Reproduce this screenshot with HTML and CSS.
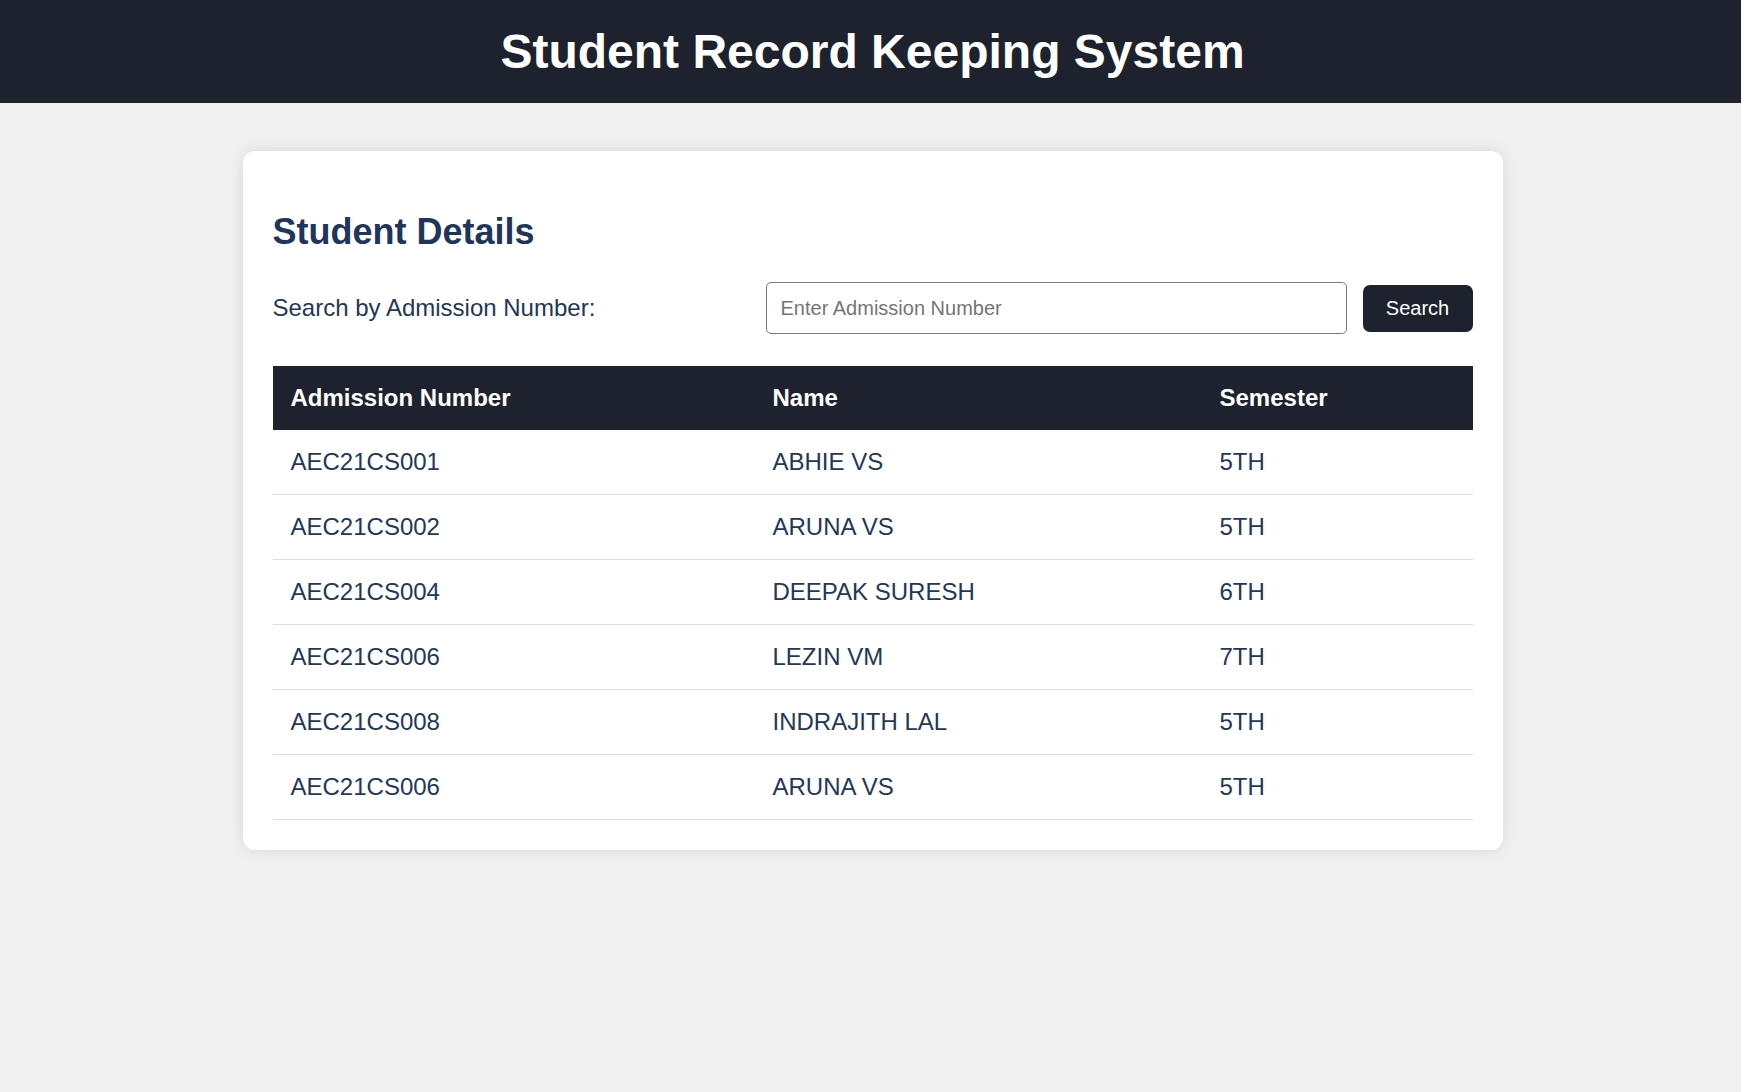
FILE: index.html
```html
<!DOCTYPE html>
<html lang="en">
<head>
<meta charset="utf-8">
<title>Student Record Keeping System</title>
<link rel="stylesheet" href="styles.css">
</head>
<body>
<header class="topbar">
  <h1 class="title">Student Record Keeping System</h1>
</header>
<div class="page">
<main class="card">
  <h2 class="card-title">Student Details</h2>
  <div class="search-row">
    <label class="search-label" for="adm">Search by Admission Number:</label>
    <input class="search-input" id="adm" type="text" placeholder="Enter Admission Number">
    <button class="search-btn" type="button">Search</button>
  </div>
  <table class="records">
    <thead>
      <tr>
        <th class="col-adm">Admission Number</th>
        <th class="col-name">Name</th>
        <th class="col-sem">Semester</th>
      </tr>
    </thead>
    <tbody>
      <tr><td>AEC21CS001</td><td>ABHIE VS</td><td>5TH</td></tr>
      <tr><td>AEC21CS002</td><td>ARUNA VS</td><td>5TH</td></tr>
      <tr><td>AEC21CS004</td><td>DEEPAK SURESH</td><td>6TH</td></tr>
      <tr><td>AEC21CS006</td><td>LEZIN VM</td><td>7TH</td></tr>
      <tr><td>AEC21CS008</td><td>INDRAJITH LAL</td><td>5TH</td></tr>
      <tr><td>AEC21CS006</td><td>ARUNA VS</td><td>5TH</td></tr>
    </tbody>
  </table>
</main>
</div>
</body>
</html>
```
FILE: styles.css
```css
* { box-sizing: border-box; }

html, body {
  margin: 0;
  padding: 0;
}

body {
  background: #f0f0f0;
  font-family: "Liberation Sans", Arial, sans-serif;
  font-size: 24px;
  color: #22375a;
  min-height: 1092px;
}

.topbar {
  background: #1d222e;
  height: 103px;
  display: flex;
  align-items: center;
  justify-content: center;
}

.title {
  margin: 0;
  color: #ffffff;
  font-size: 48px;
  font-weight: 700;
  line-height: 1;
  padding-left: 4px;
}

.page {
  padding-left: 4px;
}

.card {
  display: block;
  width: 1260px;
  margin: 48px auto 0;
  background: #ffffff;
  border-radius: 12px;
  box-shadow: 0 0 15px rgba(0, 0, 0, 0.1);
  padding: 30px 30px 30px;
}

.card-title {
  margin: 30px 0 30px;
  font-size: 36px;
  font-weight: 700;
  color: #1f355b;
  line-height: 41px;
}

.search-row {
  display: flex;
  align-items: center;
  gap: 16px;
}

.search-label {
  flex: 1;
  font-size: 24px;
  color: #22375a;
}

.search-input {
  width: 581px;
  height: 52px;
  border: 1px solid #7a7a7a;
  border-radius: 5px;
  padding: 0 14px;
  font-family: "Liberation Sans", Arial, sans-serif;
  font-size: 20px;
  color: #333;
  background: #fff;
}

.search-input::placeholder {
  color: #757575;
}

.search-btn {
  width: 110px;
  height: 47px;
  border: none;
  border-radius: 7px;
  background: #1d222e;
  color: #ffffff;
  font-family: "Liberation Sans", Arial, sans-serif;
  font-size: 20px;
  padding: 0;
}

.records {
  width: 100%;
  margin-top: 32px;
  border-collapse: collapse;
}

.records th {
  background: #1d222e;
  color: #ffffff;
  font-weight: 700;
  font-size: 24px;
  text-align: left;
  padding: 18px 18px 18px;
  line-height: 28px;
}

.col-adm { width: 482px; }
.col-name { width: 447px; }

.records td {
  padding: 18px 18px;
  line-height: 28px;
  font-size: 24px;
  color: #22375a;
  border-bottom: 1px solid #dddddd;
}
```
